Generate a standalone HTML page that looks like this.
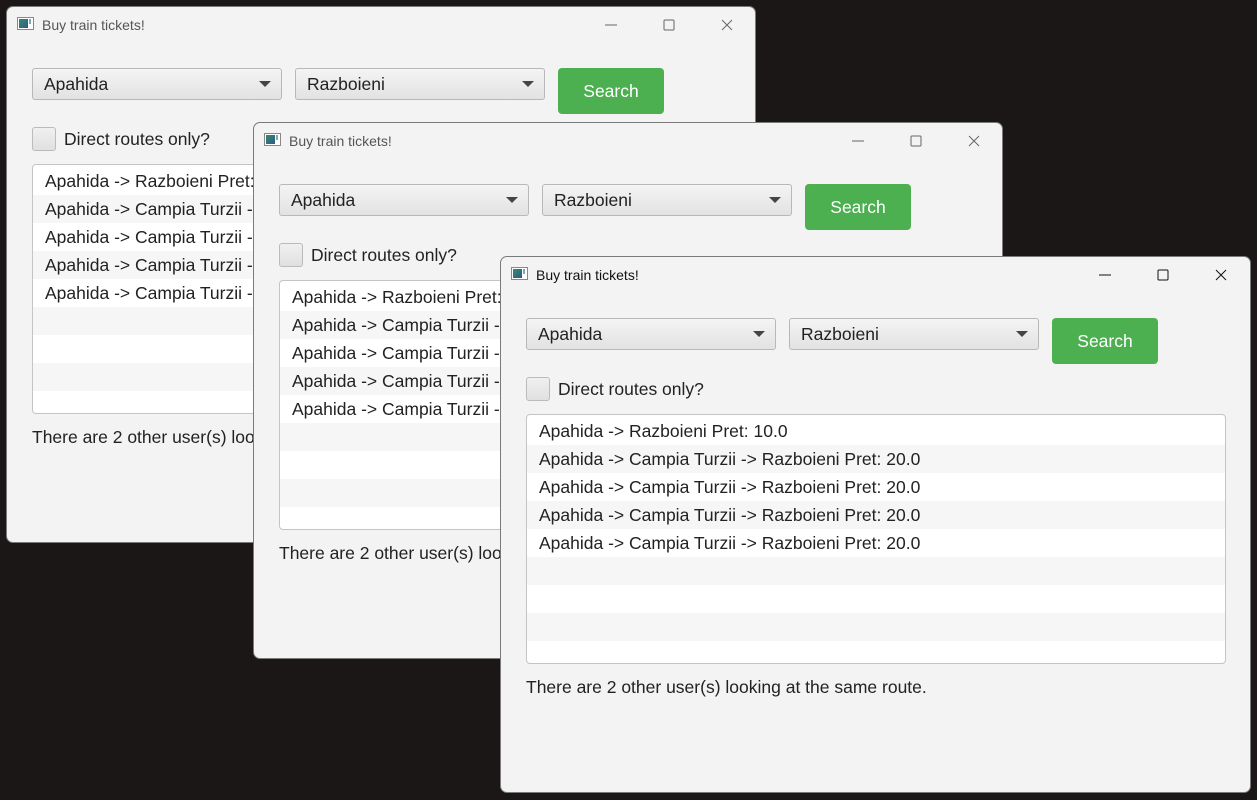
<!DOCTYPE html>
<html><head><meta charset="utf-8"><style>
*{box-sizing:border-box;margin:0;padding:0}
body{width:1257px;height:800px;background:#1b1717;position:relative;overflow:hidden;font-family:"Liberation Sans",Arial,sans-serif;color:#222}
.w{position:absolute;width:751px;height:537px;background:#f3f3f3;border:1px solid #7a7a7a;border-radius:7px;overflow:hidden}
.ic{position:absolute;left:10px;top:10px;width:17px;height:13px;border:1px solid #888;background:#fff}
.ic:before{content:"";position:absolute;left:1px;top:1px;width:9px;height:9px;background:linear-gradient(135deg,#3a8a6a,#2a5a8a)}
.ic:after{content:"";position:absolute;right:2px;top:1px;width:2px;height:5px;background:#7ab}
.tt{position:absolute;left:35px;top:10px;font-size:14px;color:#555}
.act .tt{color:#111}
.cap{position:absolute;top:10px;width:16px;height:16px}
.cb{position:absolute;top:61px;width:250px;height:32px;border:1px solid #b8b8b8;border-radius:3px;background:linear-gradient(#f4f4f4,#e2e2e2);font-size:17.5px;padding:5px 0 0 11px}
.cb:after{content:"";position:absolute;right:10px;top:12px;border-left:6px solid transparent;border-right:6px solid transparent;border-top:6px solid #444}
.sb{position:absolute;left:551px;top:61px;width:106px;height:46px;background:#4caf50;border-radius:4px;color:#fff;font-size:17.5px;text-align:center;line-height:46px}
.ck{position:absolute;left:25px;top:120px;width:24px;height:24px;border:1px solid #bbb;border-radius:3px;background:linear-gradient(#f0f0f0,#e0e0e0)}
.cl{position:absolute;left:57px;top:122px;font-size:17.5px}
.ls{position:absolute;left:25px;top:157px;width:700px;height:250px;border:1px solid #c4c4c4;border-radius:4px;background:#fff;padding-top:2px;overflow:hidden}
.ls div{height:28px;font-size:17.5px;padding:4px 0 0 12px;white-space:nowrap}
.ls div:nth-child(even){background:#f6f6f6}
.ft{position:absolute;left:25px;top:420px;font-size:17.5px}
</style></head><body>

<div class="w" style="left:6px;top:6px;width:750px">
<div class="ic"></div><div class="tt">Buy train tickets!</div>
<svg class="cap" style="left:596px" viewBox="0 0 16 16"><path d="M2 8h12" stroke="#666" stroke-width="1"/></svg>
<svg class="cap" style="left:654px" viewBox="0 0 16 16"><rect x="3" y="3" width="10" height="10" rx="1" fill="none" stroke="#666"/></svg>
<svg class="cap" style="left:712px" viewBox="0 0 16 16"><path d="M3 3l10 10M13 3L3 13" stroke="#666"/></svg>
<div class="cb" style="left:25px">Apahida</div><div class="cb" style="left:288px">Razboieni</div>
<div class="sb">Search</div><div class="ck"></div><div class="cl">Direct routes only?</div>
<div class="ls"><div>Apahida -&gt; Razboieni Pret: 10.0</div><div>Apahida -&gt; Campia Turzii -&gt; Razboieni Pret: 20.0</div><div>Apahida -&gt; Campia Turzii -&gt; Razboieni Pret: 20.0</div><div>Apahida -&gt; Campia Turzii -&gt; Razboieni Pret: 20.0</div><div>Apahida -&gt; Campia Turzii -&gt; Razboieni Pret: 20.0</div><div></div><div></div><div></div><div></div></div>
<div class="ft">There are 2 other user(s) looking at the same route.</div>
</div>

<div class="w" style="left:253px;top:122px;width:750px">
<div class="ic"></div><div class="tt">Buy train tickets!</div>
<svg class="cap" style="left:596px" viewBox="0 0 16 16"><path d="M2 8h12" stroke="#666" stroke-width="1"/></svg>
<svg class="cap" style="left:654px" viewBox="0 0 16 16"><rect x="3" y="3" width="10" height="10" rx="1" fill="none" stroke="#666"/></svg>
<svg class="cap" style="left:712px" viewBox="0 0 16 16"><path d="M3 3l10 10M13 3L3 13" stroke="#666"/></svg>
<div class="cb" style="left:25px">Apahida</div><div class="cb" style="left:288px">Razboieni</div>
<div class="sb">Search</div><div class="ck"></div><div class="cl">Direct routes only?</div>
<div class="ls"><div>Apahida -&gt; Razboieni Pret: 10.0</div><div>Apahida -&gt; Campia Turzii -&gt; Razboieni Pret: 20.0</div><div>Apahida -&gt; Campia Turzii -&gt; Razboieni Pret: 20.0</div><div>Apahida -&gt; Campia Turzii -&gt; Razboieni Pret: 20.0</div><div>Apahida -&gt; Campia Turzii -&gt; Razboieni Pret: 20.0</div><div></div><div></div><div></div><div></div></div>
<div class="ft">There are 2 other user(s) looking at the same route.</div>
</div>

<div class="w act" style="left:500px;top:256px">
<div class="ic"></div><div class="tt">Buy train tickets!</div>
<svg class="cap" style="left:596px" viewBox="0 0 16 16"><path d="M2 8h12" stroke="#111" stroke-width="1"/></svg>
<svg class="cap" style="left:654px" viewBox="0 0 16 16"><rect x="3" y="3" width="10" height="10" rx="1" fill="none" stroke="#111"/></svg>
<svg class="cap" style="left:712px" viewBox="0 0 16 16"><path d="M3 3l10 10M13 3L3 13" stroke="#111"/></svg>
<div class="cb" style="left:25px">Apahida</div><div class="cb" style="left:288px">Razboieni</div>
<div class="sb">Search</div><div class="ck"></div><div class="cl">Direct routes only?</div>
<div class="ls"><div>Apahida -&gt; Razboieni Pret: 10.0</div><div>Apahida -&gt; Campia Turzii -&gt; Razboieni Pret: 20.0</div><div>Apahida -&gt; Campia Turzii -&gt; Razboieni Pret: 20.0</div><div>Apahida -&gt; Campia Turzii -&gt; Razboieni Pret: 20.0</div><div>Apahida -&gt; Campia Turzii -&gt; Razboieni Pret: 20.0</div><div></div><div></div><div></div><div></div></div>
<div class="ft">There are 2 other user(s) looking at the same route.</div>
</div>
</body></html>
